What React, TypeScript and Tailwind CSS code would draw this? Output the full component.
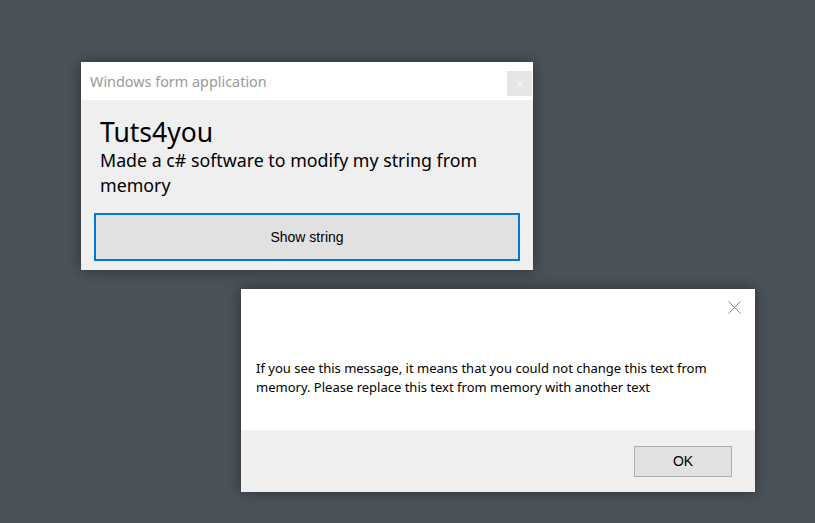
export default function App() {
  return (
    <div className="relative w-[815px] h-[523px] overflow-hidden bg-[#4b535a] font-['Noto_Sans',sans-serif]">
      {/* form window */}
      <div className="absolute left-[81px] top-[62px] w-[452px] h-[208px] flex flex-col bg-[#efefef] shadow-[0_0_14px_rgba(0,0,0,0.45)]">
        <div className="h-[38px] bg-white flex items-start justify-between">
          <span className="pl-[9px] pt-[10px] text-[14.4px] leading-[20px] text-[#9a9a9a]">Windows form application</span>
          <div className="mt-[9px] mr-[1px] w-[25px] h-[25px] bg-[#e5e5e5] flex items-center justify-center">
            <svg width="8" height="8" viewBox="0 0 8 8">
              <path d="M1 1L7 7M7 1L1 7" stroke="#f4f4f4" strokeWidth="1.2" />
            </svg>
          </div>
        </div>
        <div className="flex-1 flex flex-col px-[13px]">
          <div className="pl-[6px] pt-[16px] text-black">
            <div className="text-[26.5px] leading-[32px]">Tuts4you</div>
            <div className="text-[17.8px] leading-[25px]">
              Made a c# software to modify my string from
              <br />
              memory
            </div>
          </div>
          <button className="mt-[15px] h-[48px] w-full border-2 border-[#0078d7] bg-[#e1e1e1] text-[14px] text-black font-['Liberation_Sans',sans-serif]">
            Show string
          </button>
        </div>
      </div>

      {/* message box */}
      <div className="absolute left-[241px] top-[289px] w-[514px] h-[203px] flex flex-col bg-[#efefef] shadow-[0_0_14px_rgba(0,0,0,0.45)]">
        <div className="h-[141px] bg-white flex flex-col">
          <div className="flex justify-end pt-[12px] pr-[14px]">
            <svg width="13" height="13" viewBox="0 0 13 13">
              <path d="M0.5 0.5L12.5 12.5M12.5 0.5L0.5 12.5" stroke="#8a8a8a" strokeWidth="1" />
            </svg>
          </div>
          <p className="pl-[15px] pt-[45px] text-[13px] leading-[19px] text-black">
            If you see this message, it means that you could not change this text from
            <br />
            memory. Please replace this text from memory with another text
          </p>
        </div>
        <div className="flex justify-end pt-[16px] pr-[23px]">
          <button className="w-[98px] h-[31px] border border-[#adadad] bg-[#e1e1e1] text-[14px] text-black font-['Liberation_Sans',sans-serif]">
            OK
          </button>
        </div>
      </div>
    </div>
  );
}
